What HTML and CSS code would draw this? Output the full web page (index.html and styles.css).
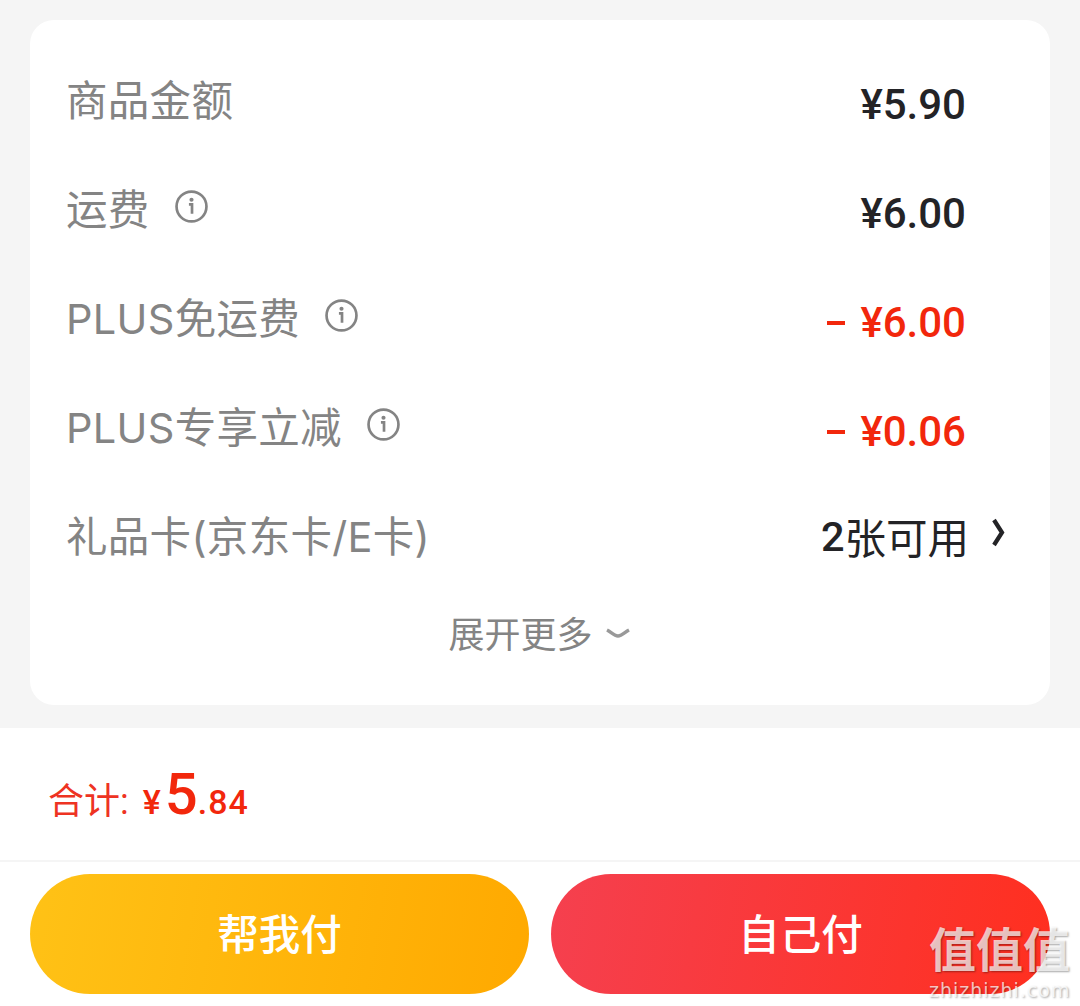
FILE: index.html
```html
<!DOCTYPE html>
<html lang="zh-CN">
<head>
  <meta charset="UTF-8" />
  <meta name="viewport" content="width=device-width, initial-scale=1.0"/>
  <title>订单金额</title>
  <link rel="stylesheet" href="styles.css">
</head>
<body>
  <div class="page">
    <section class="card">
      <div class="row">
        <span class="label">商品金额</span>
        <span class="value">¥5.90</span>
      </div>
      <div class="row">
        <span class="label">运费
          <svg class="info" viewBox="0 0 32 32"><circle cx="16" cy="16" r="14.5"/><circle class="dot" cx="16" cy="9.5" r="2"/><path d="M13.5 14h3v9"/></svg>
        </span>
        <span class="value">¥6.00</span>
      </div>
      <div class="row">
        <span class="label">PLUS免运费
          <svg class="info" viewBox="0 0 32 32"><circle cx="16" cy="16" r="14.5"/><circle class="dot" cx="16" cy="9.5" r="2"/><path d="M13.5 14h3v9"/></svg>
        </span>
        <span class="value red"><i class="minus"></i>¥6.00</span>
      </div>
      <div class="row">
        <span class="label">PLUS专享立减
          <svg class="info" viewBox="0 0 32 32"><circle cx="16" cy="16" r="14.5"/><circle class="dot" cx="16" cy="9.5" r="2"/><path d="M13.5 14h3v9"/></svg>
        </span>
        <span class="value red"><i class="minus"></i>¥0.06</span>
      </div>
      <div class="row">
        <span class="label">礼品卡(京东卡/E卡)</span>
        <span class="value plain"><b>2</b>张可用</span>
        <svg class="arrow" viewBox="0 0 16 32"><path d="M4 3l8 12.5-8 12.5"/></svg>
      </div>
      <div class="more">
        展开更多
        <svg class="more-arrow" viewBox="0 0 26 12"><path d="M2 3c4 2 7 6 11 6s7-4 11-6"/></svg>
      </div>
    </section>

    <footer class="footer">
      <div class="total">
        <span class="total-label">合计:</span>
        <span class="yen">¥</span><span class="big">5</span><span class="cents">.84</span>
      </div>
      <div class="actions">
        <button class="btn btn-yellow">帮我付</button>
        <button class="btn btn-red">自己付</button>
      </div>
    </footer>
  </div>

  <div class="watermark">
    <div class="wm-cn">值值值</div>
    <div class="wm-en">zhizhizhi.com</div>
  </div>
</body>
</html>
```

FILE: styles.css
```css
* {
  box-sizing: border-box;
}
body {
  margin: 0;
  background-color: #f5f5f5;
  font-family: "Inter", "Noto Sans CJK SC", sans-serif;
  overflow: hidden;
}
.page {
  height: 1006px;
  padding-top: 20px;
}
.card {
  margin: 0 30px;
  height: 685px;
  padding: 27px 0 0 36px;
  background-color: #fff;
  border-radius: 24px;
}
.row {
  display: flex;
  align-items: center;
  height: 109px;
  padding-right: 84px;
}
.label {
  display: flex;
  align-items: center;
  gap: 25px;
  font-size: 41.5px;
  letter-spacing: 0.3px;
  color: #848484;
  margin-top: -8px;
  white-space: nowrap;
}
.info {
  width: 33px;
  height: 33px;
  fill: none;
  stroke: #848484;
  stroke-width: 2.6;
}
.info .dot {
  fill: #848484;
  stroke: none;
}
.value {
  display: flex;
  align-items: center;
  margin-left: auto;
  font-family: "Roboto", "Noto Sans CJK SC", sans-serif;
  font-size: 42px;
  font-weight: 500;
  color: #232326;
  margin-top: 6px;
}
.red {
  color: #f2270c;
}
.minus {
  width: 18px;
  height: 4px;
  margin-right: 15px;
  background-color: #f2270c;
}
.plain {
  font-size: 41.5px;
  font-weight: 400;
  margin-top: -3px;
  margin-right: -3px;
}
.plain b {
  font-weight: 500;
}
.arrow {
  position: absolute;
  left: 990px;
  top: 517px;
  width: 16px;
  height: 32px;
  fill: none;
  stroke: #232326;
  stroke-width: 4.2;
}
.more {
  display: flex;
  align-items: center;
  justify-content: center;
  height: 88px;
  padding-right: 37px;
  gap: 12px;
  font-size: 36px;
  color: #848484;
  margin-top: -4px;
}
.more-arrow {
  width: 26px;
  height: 12px;
  fill: none;
  stroke: #999;
  stroke-width: 3.4;
  margin-top: 2px;
}
.footer {
  margin-top: 23px;
  height: 278px;
  background-color: #fff;
}
.total {
  display: flex;
  align-items: baseline;
  height: 134px;
  padding: 32px 0 0 48px;
  border-bottom: 2px solid #f5f5f5;
  color: #f2270c;
  font-family: "Roboto", "Noto Sans CJK SC", sans-serif;
  font-weight: 500;
}
.total-label {
  font-size: 36px;
  font-weight: 400;
  color: #ee3322;
  margin-right: 14px;
}
.yen {
  font-size: 34px;
  margin-right: 4px;
}
.big {
  font-size: 58px;
}
.cents {
  font-size: 34px;
  letter-spacing: 1px;
}
.actions {
  display: flex;
  justify-content: space-between;
  padding: 12px 30px 0;
}
.btn {
  width: 499px;
  height: 120px;
  padding-bottom: 6px;
  border: none;
  border-radius: 60px;
  color: #fff;
  font-family: inherit;
  font-size: 41.5px;
  font-weight: 500;
}
.btn-yellow {
  background: linear-gradient(100deg, #ffc216, #ffa900);
}
.btn-red {
  background: linear-gradient(100deg, #f5404f, #ff2f1f);
}
.watermark {
  position: absolute;
  left: 929px;
  top: 921px;
  width: 146px;
  color: rgba(255, 255, 255, 0.72);
  text-shadow: 1px 1px 2px rgba(0, 0, 0, 0.35);
}
.wm-cn {
  font-family: "Noto Sans CJK SC", sans-serif;
  font-weight: 700;
  font-size: 47px;
  line-height: 52px;
}
.wm-en {
  margin-top: 6px;
  font-family: "DejaVu Sans", sans-serif;
  font-size: 19px;
  line-height: 22px;
  letter-spacing: 1px;
  white-space: nowrap;
}
```
